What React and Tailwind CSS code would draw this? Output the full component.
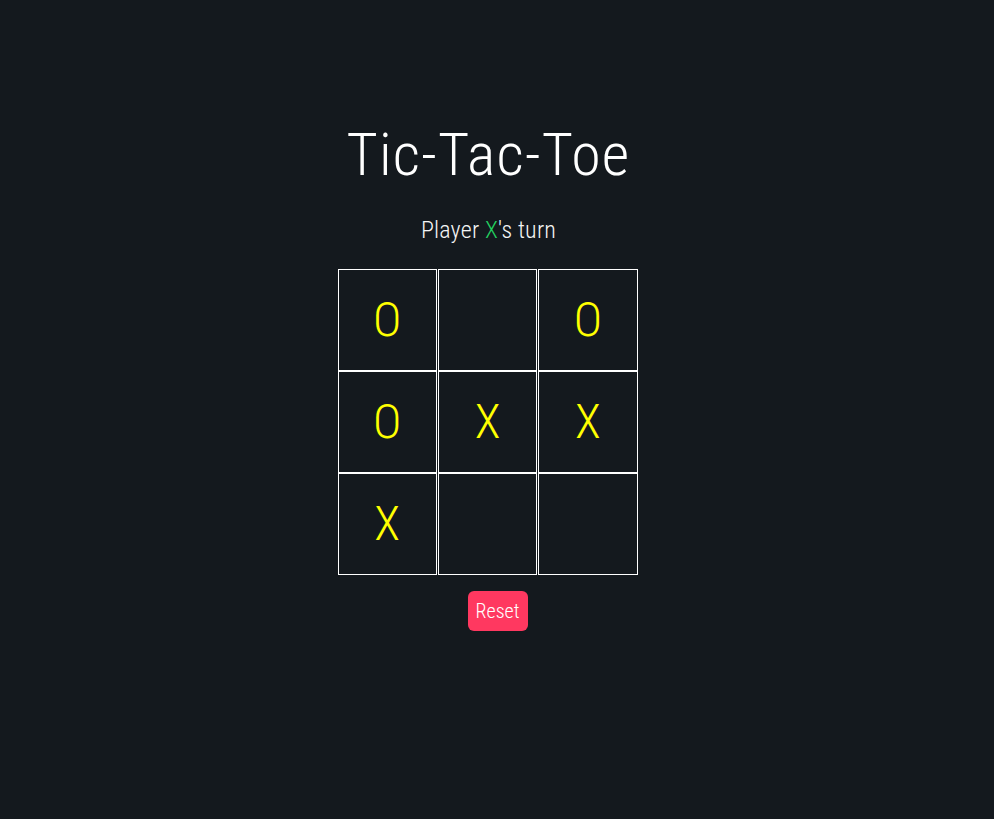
import React, { useState } from 'react';

const initial = ['O', '', 'O', 'O', 'X', 'X', 'X', '', ''];

export default function App() {
  const [cells] = useState(initial);

  return (
    <div className="min-h-[819px] w-full bg-[#14191e] pr-[17px] flex flex-col items-center font-['Roboto',sans-serif] font-light [font-stretch:condensed]">
      <h1 className="mt-[117px] text-[60px] leading-[76px] text-white tracking-[1.2px]">Tic-Tac-Toe</h1>
      <p className="mt-[22px] text-[24px] leading-[31px] text-[#f5f5f5] tracking-[0.2px]">
        Player <span className="text-[#23d160]">X</span>'s turn
      </p>
      <div className="mt-[23px] grid grid-cols-3 gap-x-px w-[300px] -translate-x-px">
        {cells.map((c, i) => (
          <div
            key={i}
            className="h-[102px] border border-white flex items-center justify-center text-[48px] text-[#ffff00]"
          >
            {c}
          </div>
        ))}
      </div>
      <button className="mt-[16px] ml-[18px] h-[40px] w-[60px] rounded-[6px] bg-[#ff3860] text-white text-[20px]">
        Reset
      </button>
    </div>
  );
}
